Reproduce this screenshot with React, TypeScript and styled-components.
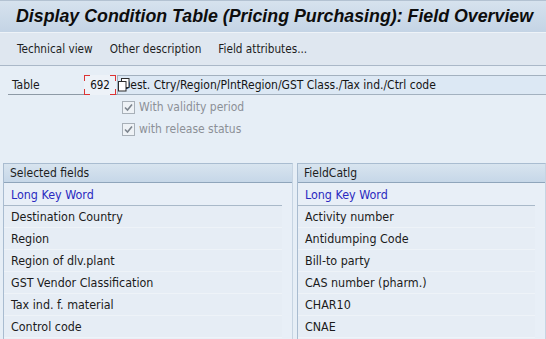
import React from "react";
import styled, { createGlobalStyle } from "styled-components";

const GlobalStyle = createGlobalStyle`
  html, body {
    margin: 0;
    padding: 0;
    background: #e6eef6;
    font-family: "DejaVu Sans Condensed", "DejaVu Sans", sans-serif;
    font-size: 11.5px;
    color: #1b1b1b;
    overflow: hidden;
  }
`;

const Screen = styled.div`
  width: 546px;
  height: 339px;
  display: flex;
  flex-direction: column;
  background: #e6eef6;
`;

const TitleBar = styled.div`
  height: 31px;
  border-top: 1px solid #b3c2d2;
  background: linear-gradient(#d6e2ee, #c4d4e5);
  display: flex;
  align-items: center;
  padding-left: 16px;
  font-family: "Liberation Sans", sans-serif;
  font-weight: bold;
  font-style: italic;
  font-size: 17.8px;
  color: #0d0d0d;
  white-space: nowrap;
`;

const Toolbar = styled.div`
  height: 32px;
  background: #dfe7f0;
  border-top: 1px solid #eef3f8;
  border-bottom: 1px solid #aab8c8;
  display: flex;
  align-items: center;
  gap: 17px;
  padding-left: 17px;
`;

const ToolItem = styled.span`
  color: #1d1d1d;
  white-space: nowrap;
  font-size: 11.7px;
`;

const Form = styled.div`
  padding: 9px 0 0 0;
  height: 83px;
`;

const FieldRow = styled.div`
  display: flex;
  align-items: center;
  height: 20px;
`;

const Label = styled.div`
  width: 110px;
  margin-left: 8px;
  padding-left: 4px;
  height: 19px;
  line-height: 19px;
  border-bottom: 1px solid #8e9aa6;
  box-sizing: border-box;
  flex: none;
  margin-right: -34px;
  font-size: 12px;
`;

const KeyInput = styled.div`
  position: relative;
  width: 32px;
  height: 20px;
  line-height: 20px;
  text-align: center;
  background: #edf2f8;
  flex: none;
  color: #111;
  z-index: 1;
`;

const Corner = styled.span<{ $v: "top" | "bottom"; $h: "left" | "right" }>`
  position: absolute;
  width: 5px;
  height: 5px;
  ${(p) => p.$v}: 0;
  ${(p) => p.$h}: 0;
  border-${(p) => p.$v}: 1px solid #d33;
  border-${(p) => p.$h}: 1px solid #d33;
`;

const DescField = styled.div`
  position: relative;
  flex: 1;
  height: 20px;
  line-height: 19px;
  box-sizing: border-box;
  background: #dce8f4;
  border: 1px solid #a3b1bf;
  border-right: none;
  padding-left: 4px;
  white-space: nowrap;
  overflow: hidden;
  margin-left: 1px;
  color: #151515;
  font-size: 12px;
`;

const CopyIcon = styled.svg`
  position: absolute;
  left: 0px;
  top: 2px;
`;

const CheckRow = styled.div`
  display: flex;
  align-items: center;
  gap: 4px;
  height: 22px;
  padding-left: 122px;
  color: #8c9097;
  font-size: 12px;
`;

const Box = styled.span`
  width: 11px;
  height: 11px;
  border: 1px solid #a8b0b8;
  background: #eef2f6;
  display: inline-flex;
  align-items: center;
  justify-content: center;
`;

const Panels = styled.div`
  margin-top: 5px;
  display: grid;
  grid-template-columns: 290px 1fr;
  gap: 4px;
  padding-left: 3px;
  flex: 1;
`;

const Panel = styled.div`
  border: 1px solid #a9bcd0;
  border-right-color: #c6d4e2;
  border-bottom: none;
  background: #e8eff7;
`;

const PanelHeader = styled.div`
  height: 18px;
  line-height: 18px;
  padding-left: 6px;
  background: linear-gradient(#d8e4ef, #c6d7e8);
  border-bottom: 1px solid #8fa5bb;
  color: #1d1d1d;
  font-size: 12px;
`;

const Row = styled.div<{ $head?: boolean }>`
  height: ${(p) => (p.$head ? 23 : 22)}px;
  line-height: ${(p) => (p.$head ? 23 : 21)}px;
  box-sizing: border-box;
  margin: 0 10px 0 0;
  padding-left: 7px;
  border-bottom: 1px solid ${(p) => (p.$head ? "#a9b9c9" : "#eef3f8")};
  color: ${(p) => (p.$head ? "#2a2ac0" : "#1b1b1b")};
  font-size: 12.4px;
  background: ${(p) => (p.$head ? "#e8eff7" : "#e6edf5")};
`;

const selected = [
  "Destination Country",
  "Region",
  "Region of dlv.plant",
  "GST Vendor Classification",
  "Tax ind. f. material",
  "Control code",
];

const catalog = [
  "Activity number",
  "Antidumping Code",
  "Bill-to party",
  "CAS number (pharm.)",
  "CHAR10",
  "CNAE",
];

const Check = () => (
  <Box>
    <svg width="9" height="9" viewBox="0 0 9 9">
      <path d="M1 4.5 L3.5 7 L8 1.5" fill="none" stroke="#7d858e" strokeWidth="1.6" />
    </svg>
  </Box>
);

export default function App() {
  return (
    <Screen>
      <GlobalStyle />
      <TitleBar>Display Condition Table (Pricing Purchasing): Field Overview</TitleBar>
      <Toolbar>
        <ToolItem>Technical view</ToolItem>
        <ToolItem>Other description</ToolItem>
        <ToolItem>Field attributes...</ToolItem>
      </Toolbar>
      <Form>
        <FieldRow>
          <Label>Table</Label>
          <KeyInput>
            692
            <Corner $v="top" $h="left" />
            <Corner $v="top" $h="right" />
            <Corner $v="bottom" $h="left" />
            <Corner $v="bottom" $h="right" />
          </KeyInput>
          <DescField>
            Dest. Ctry/Region/PlntRegion/GST Class./Tax ind./Ctrl code
            <CopyIcon width="12" height="14" viewBox="0 0 12 14">
              <rect x="3.5" y="0.5" width="7.5" height="9" fill="#fff" stroke="#2b2b2b" />
              <rect x="0.5" y="3.5" width="7.5" height="9.5" fill="#fff" stroke="#2b2b2b" />
            </CopyIcon>
          </DescField>
        </FieldRow>
        <CheckRow style={{ marginTop: 1 }}>
          <Check />
          With validity period
        </CheckRow>
        <CheckRow>
          <Check />
          with release status
        </CheckRow>
      </Form>
      <Panels>
        <Panel>
          <PanelHeader>Selected fields</PanelHeader>
          <Row $head>Long Key Word</Row>
          {selected.map((s) => (
            <Row key={s}>{s}</Row>
          ))}
        </Panel>
        <Panel>
          <PanelHeader>FieldCatlg</PanelHeader>
          <Row $head>Long Key Word</Row>
          {catalog.map((s) => (
            <Row key={s}>{s}</Row>
          ))}
        </Panel>
      </Panels>
    </Screen>
  );
}
